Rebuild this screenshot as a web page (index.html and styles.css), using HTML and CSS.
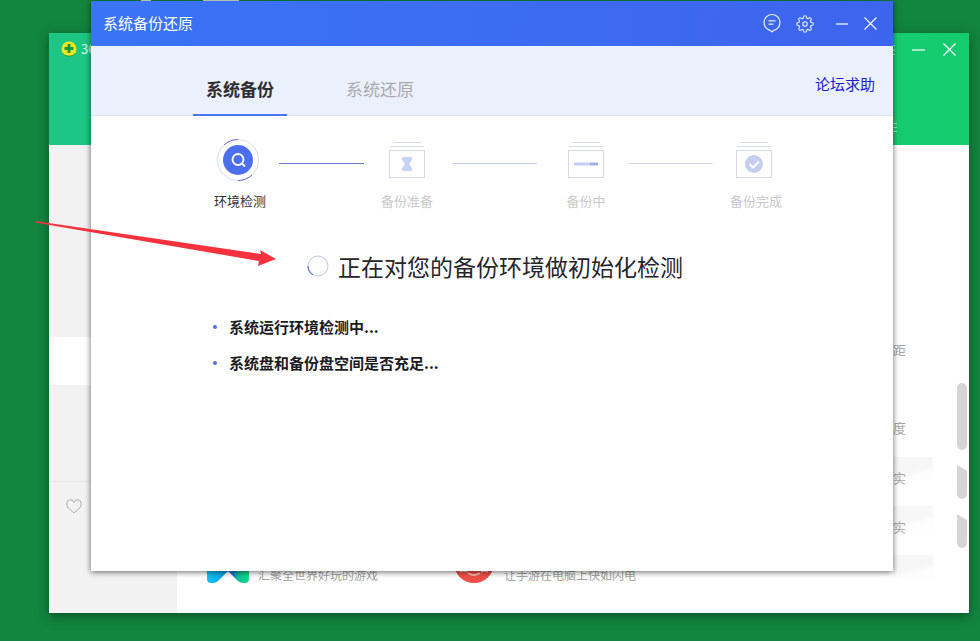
FILE: index.html
```html
<!DOCTYPE html>
<html lang="zh-CN">
<head>
  <meta charset="UTF-8">
  <title>系统备份还原</title>
  <link rel="stylesheet" href="styles.css">
</head>
<body>
  <div class="top-bits"><span class="bit-a"></span><span class="bit-b"></span></div>

  <!-- window behind the dialog -->
  <div class="back-window">
    <div class="back-head">
      <div class="back-title">
        <svg class="logo" width="16" height="16" viewBox="0 0 16 16">
          <circle cx="8" cy="8" r="7.500" fill="#f6e61a"/>
          <path d="M1.500 12a7.500 7.500 0 0 0 13 0a9 9 0 0 1-13 0z" fill="#17a04c"/>
          <path d="M6.500 3h3v3h3v3h-3v3h-3V9h-3V6h3z" fill="#149a3f"/>
        </svg>
        <span>360安全卫士</span>
      </div>
      <div class="back-controls">
        <svg class="back-menu" width="10" height="12" viewBox="0 0 10 12" stroke="#bff0d5" fill="none"><path d="M0 1.500h8M0 6h8M0 10.500h8"/></svg>
        <svg class="back-min" width="13" height="2" viewBox="0 0 13 2"><path d="M0 1h13" stroke="#fff" stroke-width="1.200"/></svg>
        <svg width="13" height="13" viewBox="0 0 13 13" stroke="#fff" stroke-width="1.200"><path d="M.5 .5l12 12M12.500 .5l-12 12"/></svg>
      </div>
      <span class="head-mark"></span>
    </div>
    <div class="back-body">
      <div class="back-side">
        <div class="side-band"></div>
        <div class="side-foot">
          <svg width="16" height="15" viewBox="0 0 16 15" fill="none" stroke="#aaa"><path d="M8 13.800C3 10.200.8 7.800.8 5A3.700 3.700 0 0 1 8 3.400 3.700 3.700 0 0 1 15.200 5c0 2.800-2.200 5.200-7.200 8.800z"/></svg>
        </div>
      </div>
      <div class="back-main">
        <div class="promo">
          <div class="promo-item">
            <svg width="42" height="24" viewBox="0 0 42 24">
              <defs>
                <linearGradient id="gameGrad" x1="0" x2="1" y1="0" y2="0">
                  <stop offset="0" stop-color="#0fc6f0"/>
                  <stop offset=".35" stop-color="#10a8e8"/>
                  <stop offset=".6" stop-color="#1a6fd8"/>
                  <stop offset=".75" stop-color="#10c09a"/>
                  <stop offset="1" stop-color="#12dd88"/>
                </linearGradient>
              </defs>
              <path d="M0 8H42V20q0 4-4 4h-2q-3 0-5-2L21 12 11 22q-2 2-5 2H4q-4 0-4-4z" fill="url(#gameGrad)"/>
            </svg>
            <span>汇聚全世界好玩的游戏</span>
          </div>
          <div class="promo-item">
            <svg width="41" height="24" viewBox="0 0 41 24">
              <circle cx="20" cy="4" r="20" fill="#ee4f48"/>
              <path d="M14 14q6 4 12 0" fill="none" stroke="#f8b5a8" stroke-width="2"/>
              <path d="M6 13q4-2 7 0M27 13q4-2 7 0" fill="none" stroke="#f8c5b8" stroke-width="1.500"/>
            </svg>
            <span>让手游在电脑上快如闪电</span>
          </div>
        </div>
        <div class="notes">
          <div class="note note-first">距</div>
          <div class="note note-second">度</div>
          <div class="note-row">实</div>
          <div class="note-row">实</div>
          <div class="note-row"></div>
        </div>
      </div>
      <div class="back-scroll">
        <div class="thumb thumb-long"></div>
        <div class="thumb thumb-cut"></div>
        <div class="thumb thumb-cut"></div>
      </div>
    </div>
  </div>

  <!-- dialog -->
  <div class="dialog">
    <div class="title-bar">
      <span class="title-text">系统备份还原</span>
      <div class="title-icons">
        <svg class="ico-chat" width="20" height="21" viewBox="0 0 20 21" fill="none" stroke="#e8eeff" stroke-width="1.200">
          <path d="M10 1.500a8 8 0 0 1 1.800 15.800L10 19l-1.800-1.700A8 8 0 0 1 10 1.500z"/>
          <path d="M6.500 7.800h7M6.500 11.200h5"/>
        </svg>
        <svg class="ico-gear" width="18" height="18" viewBox="0 0 24 24" fill="none" stroke="#e8eeff" stroke-width="1.500">
          <circle cx="12" cy="12" r="3"/>
          <path d="M19.400 15a1.650 1.650 0 0 0 .33 1.820l.06.06a2 2 0 0 1 0 2.830 2 2 0 0 1-2.830 0l-.06-.06a1.650 1.650 0 0 0-1.820-.33 1.650 1.650 0 0 0-1 1.510V21a2 2 0 0 1-2 2 2 2 0 0 1-2-2v-.09A1.650 1.650 0 0 0 9 19.400a1.650 1.650 0 0 0-1.820.33l-.06.06a2 2 0 0 1-2.830 0 2 2 0 0 1 0-2.830l.06-.06a1.650 1.650 0 0 0 .33-1.820 1.650 1.650 0 0 0-1.510-1H3a2 2 0 0 1-2-2 2 2 0 0 1 2-2h.09A1.650 1.650 0 0 0 4.600 9a1.650 1.650 0 0 0-.33-1.820l-.06-.06a2 2 0 0 1 0-2.830 2 2 0 0 1 2.830 0l.06.06a1.650 1.650 0 0 0 1.820.33H9a1.650 1.650 0 0 0 1-1.510V3a2 2 0 0 1 2-2 2 2 0 0 1 2 2v.09a1.650 1.650 0 0 0 1 1.510 1.650 1.650 0 0 0 1.820-.33l.06-.06a2 2 0 0 1 2.830 0 2 2 0 0 1 0 2.830l-.06.06a1.650 1.650 0 0 0-.33 1.820V9a1.650 1.650 0 0 0 1.510 1H21a2 2 0 0 1 2 2 2 2 0 0 1-2 2h-.09a1.650 1.650 0 0 0-1.510 1z"/>
        </svg>
        <svg class="ico-min" width="12" height="2" viewBox="0 0 12 2"><path d="M0 1h12" stroke="#fff" stroke-width="1.200"/></svg>
        <svg class="ico-close" width="13" height="13" viewBox="0 0 13 13" stroke="#fff" stroke-width="1.100"><path d="M.5 .5l12 12M12.500 .5l-12 12"/></svg>
      </div>
    </div>

    <div class="tab-bar">
      <div class="tab tab-active">系统备份</div>
      <div class="tab">系统还原</div>
      <a class="help-link">论坛求助</a>
    </div>

    <div class="steps">
      <div class="step step-current">
        <svg width="44" height="44" viewBox="0 0 44 44" fill="none">
          <circle cx="22" cy="22" r="20.500" stroke="#d5dcf4"/>
          <path d="M8 7A20.500 20.500 0 0 1 22 1.500M36 37A20.500 20.500 0 0 1 22 42.500" stroke="#6272c8"/>
          <circle cx="22" cy="22" r="15" fill="#4c6ff0"/>
          <circle cx="22" cy="21.500" r="5.500" stroke="#fff" stroke-width="1.800"/>
          <path d="M26 25.500l3 3" stroke="#fff" stroke-width="1.800"/>
        </svg>
        <span>环境检测</span>
      </div>
      <div class="step-line line-done"></div>
      <div class="step">
        <svg width="44" height="44" viewBox="0 0 44 44" fill="none">
          <path d="M8 4.500h28M5 8.500h34" stroke="#d4d9ec"/>
          <rect x="4.500" y="12.500" width="35" height="27" stroke="#d4d9ec"/>
          <path d="M17 19h10v3l-3 4 3 4v3H17v-3l3-4-3-4z" fill="#c7d2f4"/>
        </svg>
        <span>备份准备</span>
      </div>
      <div class="step-line"></div>
      <div class="step">
        <svg width="44" height="44" viewBox="0 0 44 44" fill="none">
          <path d="M8 4.500h28M5 8.500h34" stroke="#d4d9ec"/>
          <rect x="4.500" y="12.500" width="35" height="27" stroke="#d4d9ec"/>
          <path d="M10 26h16" stroke="#c5cdf4" stroke-width="3"/>
          <path d="M26 26h8" stroke="#a3aee4" stroke-width="3"/>
        </svg>
        <span>备份中</span>
      </div>
      <div class="step-line line-last"></div>
      <div class="step step-final">
        <svg width="44" height="44" viewBox="0 0 44 44" fill="none">
          <path d="M8 4.500h28M5 8.500h34" stroke="#d4d9ec"/>
          <rect x="4.500" y="12.500" width="35" height="27" stroke="#d4d9ec"/>
          <circle cx="22" cy="26" r="9" fill="#c5cdf0"/>
          <path d="M17.500 26l3.500 3.500 6-6" stroke="#fff" stroke-width="2"/>
        </svg>
        <span>备份完成</span>
      </div>
    </div>

    <div class="status">
      <svg class="spinner" width="22" height="22" viewBox="0 0 22 22" fill="none">
        <circle cx="11" cy="11" r="10" stroke="#bcc8ee"/>
        <path d="M1 11a10 10 0 0 0 5 8.700" stroke="#5a70c8" stroke-width="1.200"/>
      </svg>
      <h2>正在对您的备份环境做初始化检测</h2>
    </div>

    <ul class="check-list">
      <li>系统运行环境检测中...</li>
      <li>系统盘和备份盘空间是否充足...</li>
    </ul>
  </div>

  <!-- red arrow drawn on top of the screenshot -->
  <svg class="arrow" width="250" height="50" viewBox="0 0 250 50">
    <path d="M0 0L226 33L225 29L241 38L223 45L224 40L0 1.500z" fill="#f5323e"/>
  </svg>
</body>
</html>
```

FILE: styles.css
```css
* {
  box-sizing: border-box;
}

body {
  position: relative;
  width: 980px;
  height: 641px;
  margin: 0;
  overflow: hidden;
  background-color: #12853f;
  font-family: "Noto Sans CJK SC", "Noto Sans", sans-serif;
}

.top-bits span {
  position: absolute;
  top: 0;
  height: 1px;
  background-color: #dfe8e4;
}

.bit-a {
  left: 141px;
  width: 10px;
}

.bit-b {
  left: 203px;
  width: 36px;
}

/* back window */
.back-window {
  position: absolute;
  left: 49px;
  top: 33px;
  width: 920px;
  height: 580px;
  display: flex;
  flex-direction: column;
  background-color: #fff;
  box-shadow: 0 3px 10px rgba(0, 40, 15, 0.55);
}

.back-head {
  position: relative;
  display: flex;
  justify-content: space-between;
  height: 112px;
  padding: 8px 13px 0 12px;
  background: linear-gradient(90deg, #1dc684, #14cc6e);
}

.back-title {
  display: flex;
  align-items: flex-start;
  gap: 4px;
  color: #e6f8ef;
  font-size: 13px;
  line-height: 16px;
}

.back-controls {
  display: flex;
  align-items: flex-start;
}

.back-menu {
  margin-top: 3px;
  margin-right: 15px;
}

.back-min {
  margin-top: 8px;
  margin-right: 18px;
}

.back-controls svg:last-child {
  margin-top: 2px;
}

.head-mark {
  position: absolute;
  left: 844px;
  top: 90px;
  width: 4px;
  height: 10px;
  background: repeating-linear-gradient(#9fe8c2 0 1px, transparent 1px 4px);
}

.back-body {
  flex: 1;
  display: flex;
  min-height: 0;
}

.back-side {
  width: 128px;
  padding-top: 192px;
  background-color: #f2f2f3;
}

.side-band {
  height: 48px;
  background-color: #fff;
}

.side-foot {
  margin-top: 96px;
  padding: 13px 0 0 17px;
  border-top: 1px solid #e6e6e6;
}

.back-main {
  flex: 1;
  display: flex;
  justify-content: space-between;
}

.promo {
  align-self: flex-end;
  display: flex;
  gap: 76px;
  padding: 0 0 30px 30px;
}

.promo-item {
  display: flex;
  align-items: flex-end;
  gap: 9px;
  color: #a3a3a3;
  font-size: 12px;
}

.promo-item span {
  line-height: 14px;
  margin-bottom: 1px;
}

.notes {
  width: 64px;
  color: #a8a8a8;
  font-size: 13px;
}

.note {
  height: 20px;
  line-height: 20px;
}

.note-first {
  margin-top: 195px;
}

.note-second {
  margin-top: 58px;
  margin-bottom: 19px;
}

.note-row {
  width: 40px;
  height: 49px;
  line-height: 42px;
  background: linear-gradient(165deg, #f7f7f7 55%, #fdfdfd 70%) no-repeat;
  background-size: 40px 24px;
}

.back-scroll {
  width: 12px;
  padding: 238px 2px 0 0;
}

.thumb {
  width: 10px;
  background-color: #d5d5d5;
  border-radius: 5px;
}

.thumb-long {
  height: 67px;
}

.thumb-cut {
  height: 34px;
  margin-top: 15px;
  border-radius: 0 0 5px 5px;
  clip-path: polygon(0 0, 100% 18%, 100% 100%, 0 100%);
}

/* dialog */
.dialog {
  position: absolute;
  left: 91px;
  top: 1px;
  width: 802px;
  height: 570px;
  background-color: #fff;
  box-shadow: 0 1px 6px rgba(0, 0, 0, 0.6);
}

.title-bar {
  display: flex;
  align-items: center;
  height: 45px;
  padding: 0 16px 0 12px;
  color: #fff;
  font-size: 15px;
  background: linear-gradient(100deg, #3a74f6, #3d64ec);
}

.title-text {
  padding-bottom: 3px;
}

.title-icons {
  display: flex;
  align-items: center;
  margin-left: auto;
}

.ico-gear {
  margin-left: 14px;
}

.ico-min {
  margin-left: 22px;
}

.ico-close {
  margin-left: 16px;
}

.tab-bar {
  display: flex;
  align-items: stretch;
  height: 70px;
  padding: 0 18px 0 102px;
  background-color: #ebf0fd;
  border-bottom: 1px solid #e0e5f0;
}

.tab {
  width: 94px;
  margin-right: 46px;
  padding-top: 29px;
  color: #a9a9ad;
  font-size: 17px;
  line-height: 28px;
  text-align: center;
}

.tab-active {
  color: #2e2e33;
  font-weight: 700;
  border-bottom: 2px solid #4a74f0;
  margin-bottom: -1px;
}

.help-link {
  margin-left: auto;
  padding-top: 25px;
  color: #1a1ad0;
  font-size: 15px;
  line-height: 26px;
}

.steps {
  display: flex;
  align-items: flex-start;
  padding: 22px 0 0 106px;
}

.step {
  flex: none;
  width: 82px;
  display: flex;
  flex-direction: column;
  align-items: center;
  color: #c9c9c9;
  font-size: 13px;
}

.step span {
  margin-top: 9px;
  line-height: 20px;
}

.step-current {
  color: #333;
}

.step-current span,
.step-final span {
  margin-left: 4px;
}

.step-line {
  flex: none;
  width: 85px;
  height: 1px;
  margin: 25px 8px 0 4px;
  background-color: #c7d1ea;
}

.line-done {
  margin: 25px 2px 0 0;
  background-color: #6478d8;
}

.line-last {
  width: 84px;
  margin: 25px 0 0 2px;
  background-color: #d2d4e6;
}

.status {
  display: flex;
  align-items: center;
  gap: 9px;
  margin-top: 38px;
  padding-left: 216px;
}

.spinner {
  flex: none;
}

.status h2 {
  margin: 0;
  color: #26262a;
  font-size: 23px;
  font-weight: 400;
  line-height: 34px;
}

.check-list {
  margin: 34px 0 0;
  padding: 0 0 0 138px;
  color: #1c1c1f;
  font-size: 15px;
  font-weight: 700;
}

.check-list li {
  position: relative;
  line-height: 20px;
  margin-bottom: 16px;
  list-style: none;
}

.check-list li::before {
  content: "";
  position: absolute;
  left: -16px;
  top: 8px;
  width: 4px;
  height: 4px;
  border-radius: 50%;
  background-color: #5570e8;
}

.arrow {
  position: absolute;
  left: 35px;
  top: 221px;
}
```
